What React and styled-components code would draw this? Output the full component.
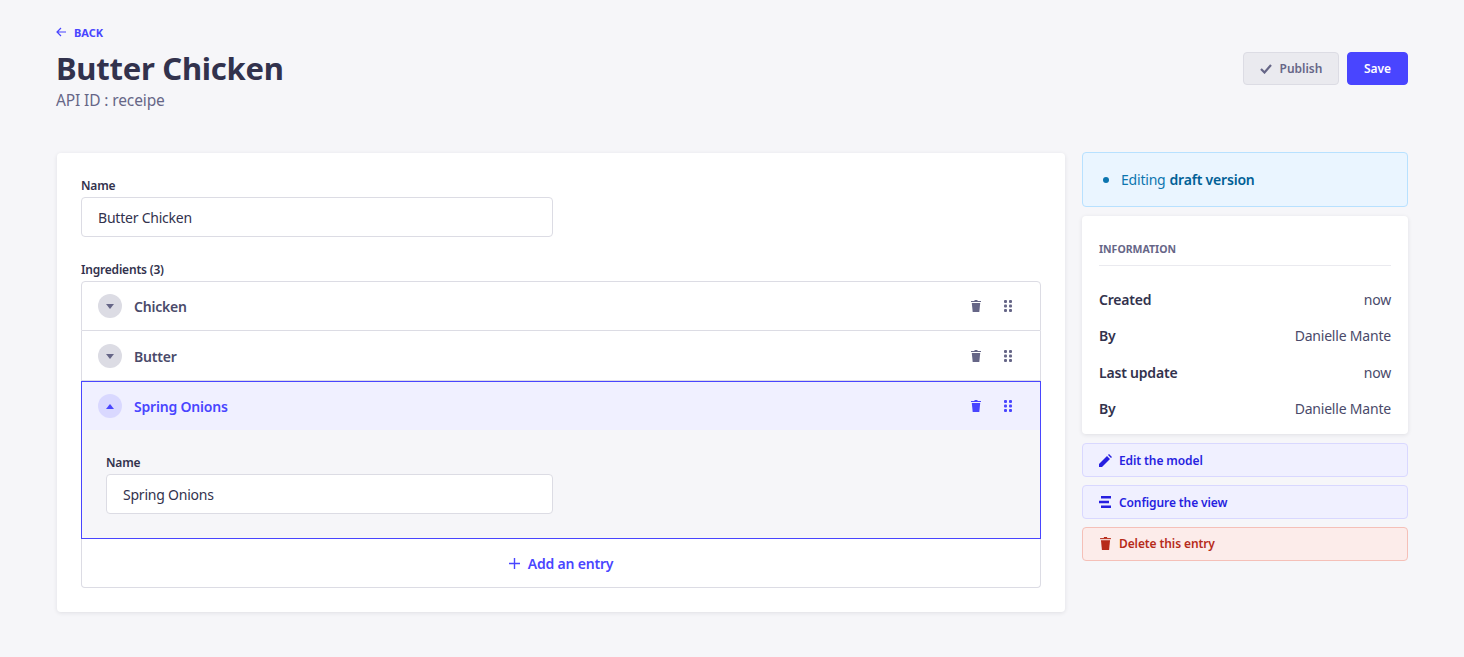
import React from "react";
import styled, { createGlobalStyle } from "styled-components";

const Global = createGlobalStyle`
  html, body { margin: 0; padding: 0; background: #f6f6f9; }
  body { font-family: "Noto Sans", "Open Sans", sans-serif; color: #32324d; }
  * { box-sizing: border-box; }
`;
const Page = styled.div`
  height: 657px; overflow: hidden; padding: 0 56px; background: #f6f6f9;
`;
const Header = styled.header`
  height: 152px; padding-top: 24px; display: flex; justify-content: space-between;
`;
const TitleBlock = styled.div`display: flex; flex-direction: column;`;
const Back = styled.a`
  display: flex; align-items: center; gap: 8px; height: 16px;
  font-size: 11px; font-weight: 700; text-transform: uppercase; color: #4945ff;
`;
const Title = styled.h1`
  margin: 7px 0 0; font-size: 31px; line-height: 42px; font-weight: 700; color: #32324d; letter-spacing: -0.26px;
`;
const Sub = styled.div`
  font-size: 15.5px; line-height: 22px; color: #666687; letter-spacing: -0.12px;
`;
const Actions = styled.div`
  display: flex; gap: 8px; margin-top: 28px; align-items: flex-start;
`;
const PublishBtn = styled.button`
  height: 33px; width: 96px; display: flex; align-items: center; justify-content: center; gap: 8px;
  border: 1px solid #dcdce4; background: #eaeaef; border-radius: 4px; color: #666687;
  font: 600 12px "Noto Sans", sans-serif; padding: 0;
`;
const SaveBtn = styled.button`
  height: 33px; width: 61px; border: 1px solid #4945ff; background: #4945ff; border-radius: 4px; color: #fff;
  font: 600 12px "Noto Sans", sans-serif; padding: 0;
`;
const Grid = styled.div`
  display: grid; grid-template-columns: 1010px 326px; gap: 16px; align-items: start;
`;
const MainCard = styled.section`
  background: #fff; border-radius: 4px; box-shadow: 0 1px 4px rgba(33,33,52,.1);
  padding: 24px; margin: 1px 1px 0; height: 459px;
`;
const Label = styled.div`
  font-size: 12px; font-weight: 600; line-height: 16px; color: #32324d; padding-top: 1px; margin-bottom: 3px; letter-spacing: -0.2px;
`;
const Input = styled.div`
  width: ${p => p.$w}px; height: 40px; border: 1px solid #dcdce4; border-radius: 4px; background: #fff;
  padding: 0 16px; display: flex; align-items: center; font-size: 14px; color: #32324d; letter-spacing: -0.22px;
`;
const Field = styled.div`margin-bottom: ${p => p.$mb || 0}px;`;
const List = styled.div`
  width: 960px; display: flex; flex-direction: column;
`;
const Row = styled.div`
  height: ${p => p.$h}px; display: flex; align-items: center; padding: ${p => p.$first || p.$active ? 0 : 1}px 24px 0 16px;
  background: ${p => p.$active ? "#f0f0ff" : "#fff"};
  border-left: 1px solid ${p => p.$active ? "#4945ff" : "#dcdce4"};
  border-right: 1px solid ${p => p.$active ? "#4945ff" : "#dcdce4"};
  border-top: ${p => p.$active ? "1px solid #4945ff" : p.$first ? "1px solid #dcdce4" : "0"};
  border-bottom: ${p => p.$active ? "0" : "1px solid #dcdce4"};
  border-radius: ${p => p.$first ? "4px 4px 0 0" : "0"};
  color: ${p => p.$active ? "#4945ff" : "#4a4a6a"};
`;
const Caret = styled.div`
  width: 24px; height: 24px; border-radius: 50%; display: flex; align-items: center; justify-content: center;
  background: ${p => p.$active ? "#d9d8ff" : "#dcdce4"};
  color: ${p => p.$active ? "#4945ff" : "#666687"};
`;
const RowName = styled.div`
  margin-left: 12px; flex: 1; font-size: 14px; font-weight: 600; letter-spacing: -0.2px;
`;
const RowIcons = styled.div`
  display: flex; align-items: center; gap: 23px; color: ${p => p.$active ? "#4945ff" : "#666687"}; padding-right: 4px;
`;
const Body = styled.div`
  width: 960px; height: 109px; background: #f6f6f9; padding: 24px 24px 0;
  border-left: 1px solid #4945ff; border-right: 1px solid #4945ff; border-bottom: 1px solid #4945ff;
`;
const AddRow = styled.div`
  width: 960px; height: 49px; display: flex; align-items: center; justify-content: center; gap: 8px;
  border: 1px solid #dcdce4; border-top: 0; border-radius: 0 0 4px 4px; color: #4945ff;
  font-size: 14px; font-weight: 600; letter-spacing: -0.2px;
`;
const Side = styled.aside`display: flex; flex-direction: column;`;
const Draft = styled.div`
  height: 55px; border: 1px solid #b8e1ff; background: #eaf5ff; border-radius: 4px;
  display: flex; align-items: center; padding-left: 20px; color: #0c75af; font-size: 14px; letter-spacing: -0.2px;
  b { color: #006096; font-weight: 600; margin-left: 4px; }
`;
const Dot = styled.span`
  width: 6px; height: 6px; border-radius: 50%; background: #0c75af; margin-right: 12px;
`;
const InfoCard = styled.div`
  margin-top: 9px; height: 218px; background: #fff; border-radius: 4px; box-shadow: 0 1px 4px rgba(33,33,52,.1);
  padding: 25px 17px 0;
`;
const InfoTitle = styled.div`
  font-size: 10.5px; font-weight: 700; line-height: 17px; color: #666687; text-transform: uppercase;
  padding-bottom: 7px; border-bottom: 1px solid #eaeaef; margin-bottom: 15.5px;
`;
const InfoRow = styled.div`
  height: 36.3px; display: flex; justify-content: space-between; align-items: center; font-size: 14px; color: #4a4a6a; letter-spacing: -0.2px;
  b { font-weight: 600; color: #32324d; }
`;
const SideBtn = styled.div`
  height: 34px; border-radius: 4px; display: flex; align-items: center; gap: 7px; padding-left: 16px;
  padding-bottom: ${p => p.$danger ? 2 : 0}px;
  margin-top: ${p => p.$mt}px;
  font-size: 12px; font-weight: 600; letter-spacing: -0.1px;
  background: ${p => p.$danger ? "#fcecea" : "#f0f0ff"};
  border: 1px solid ${p => p.$danger ? "#f5c0b8" : "#d9d8ff"};
  color: ${p => p.$danger ? "#b72b1a" : "#271fe0"};
`;

const Trash = ({ w = 10, h = 12 }) => (
  <svg width={w} height={h} viewBox="0 0 10 12" fill="currentColor">
    <path d="M3.500 0h3v1h-3z" />
    <path d="M0 1h10v1H0z" />
    <path d="M.8 3h8.400l-.9 9H1.700z" />
  </svg>
);
const Drag = () => (
  <svg width="8" height="12" viewBox="0 0 8 12" fill="currentColor">
    {[0, 1, 2].flatMap(r => [0, 1].map(c => <rect key={r + "-" + c} x={c * 5} y={r * 4.5} width="3" height="3" rx="1" />))}
  </svg>
);
const Tri = ({ up }) => (
  <svg width="8" height="5" viewBox="0 0 8 5" fill="currentColor">
    <path d={up ? "M0 5L4 0l4 5z" : "M0 0h8L4 5z"} />
  </svg>
);

export default function App() {
  return (
    <Page>
      <Global />
      <Header>
        <TitleBlock>
          <Back>
            <svg width="10" height="10" viewBox="0 0 10 10" fill="none" stroke="currentColor" strokeWidth="1.200">
              <path d="M10 5H1M5 1L1 5l4 4" />
            </svg>
            Back
          </Back>
          <Title>Butter Chicken</Title>
          <Sub>API ID : receipe</Sub>
        </TitleBlock>
        <Actions>
          <PublishBtn>
            <svg width="12" height="10" viewBox="0 0 12 10" fill="none" stroke="currentColor" strokeWidth="2.200">
              <path d="M1 5l3.500 3.500L11 1" />
            </svg>
            Publish
          </PublishBtn>
          <SaveBtn>Save</SaveBtn>
        </Actions>
      </Header>
      <Grid>
        <MainCard>
          <Field $mb={24}>
            <Label>Name</Label>
            <Input $w={472}>Butter Chicken</Input>
          </Field>
          <Label>Ingredients (3)</Label>
          <List>
            <Row $h={50} $first>
              <Caret><Tri /></Caret>
              <RowName>Chicken</RowName>
              <RowIcons><Trash /><Drag /></RowIcons>
            </Row>
            <Row $h={50}>
              <Caret><Tri /></Caret>
              <RowName>Butter</RowName>
              <RowIcons><Trash /><Drag /></RowIcons>
            </Row>
            <Row $h={49} $active>
              <Caret $active><Tri up /></Caret>
              <RowName>Spring Onions</RowName>
              <RowIcons $active><Trash /><Drag /></RowIcons>
            </Row>
            <Body>
              <Label>Name</Label>
              <Input $w={447}>Spring Onions</Input>
            </Body>
            <AddRow>
              <svg width="11" height="11" viewBox="0 0 11 11" fill="none" stroke="currentColor" strokeWidth="1.400">
                <path d="M5.500 0v11M0 5.500h11" />
              </svg>
              Add an entry
            </AddRow>
          </List>
        </MainCard>
        <Side>
          <Draft><Dot />Editing<b>draft version</b></Draft>
          <InfoCard>
            <InfoTitle>Information</InfoTitle>
            <InfoRow><b>Created</b><span>now</span></InfoRow>
            <InfoRow><b>By</b><span>Danielle Mante</span></InfoRow>
            <InfoRow><b>Last update</b><span>now</span></InfoRow>
            <InfoRow><b>By</b><span>Danielle Mante</span></InfoRow>
          </InfoCard>
          <SideBtn $mt={9}>
            <svg width="13" height="13" viewBox="0 0 13 13" fill="currentColor">
              <path d="M0 13V10L8 2l3 3-8 8zM9 1l1-1 3 3-1 1z" />
            </svg>
            Edit the model
          </SideBtn>
          <SideBtn $mt={8}>
            <svg width="13" height="12" viewBox="0 0 13 12" fill="currentColor">
              <path d="M2 0h10v2.600H2zM0 4.700h10v2.600H0zM2 9.400h10V12H2z" />
            </svg>
            Configure the view
          </SideBtn>
          <SideBtn $mt={8} $danger>
            <Trash w={13} h={13} />
            Delete this entry
          </SideBtn>
        </Side>
      </Grid>
    </Page>
  );
}
